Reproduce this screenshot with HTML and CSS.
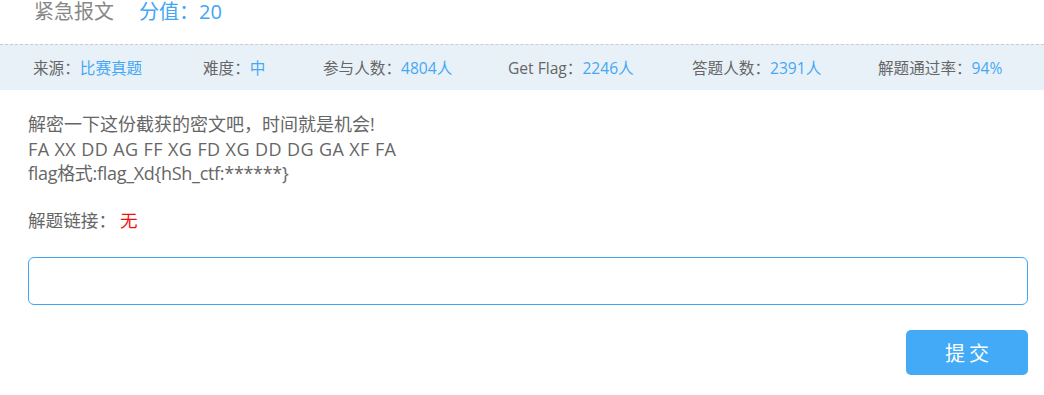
FILE: index.html
```html
<!DOCTYPE html>
<html lang="zh-CN">
<head>
<meta charset="utf-8">
<title>紧急报文</title>
<link rel="stylesheet" href="styles.css">
</head>
<body>
<div class="page">
  <div class="head">
    <span class="title">紧急报文</span>
    <span class="score">分值：20</span>
  </div>
  <div class="info">
    <div class="item"><span class="lbl">来源：</span><span class="val">比赛真题</span></div>
    <div class="item"><span class="lbl">难度：</span><span class="val">中</span></div>
    <div class="item"><span class="lbl">参与人数：</span><span class="val">4804人</span></div>
    <div class="item"><span class="lbl">Get Flag：</span><span class="val">2246人</span></div>
    <div class="item"><span class="lbl">答题人数：</span><span class="val">2391人</span></div>
    <div class="item"><span class="lbl">解题通过率：</span><span class="val">94%</span></div>
  </div>
  <div class="body">
    <div class="desc">
      <p>解密一下这份截获的密文吧，时间就是机会!</p>
      <p class="latin">FA XX DD AG FF XG FD XG DD DG GA XF FA</p>
      <p class="tight">flag格式:flag_Xd{hSh_ctf:******}</p>
    </div>
    <div class="link"><span class="lbl2">解题链接：</span><span class="none">无</span></div>
    <input class="flag-input" type="text">
    <div class="actions"><button class="submit">提交</button></div>
  </div>
</div>
</body>
</html>
```
FILE: styles.css
```css
* { box-sizing: border-box; }
html, body { margin: 0; padding: 0; background: #fff; }
body {
  font-family: "Open Sans", "Noto Sans CJK SC", sans-serif;
  color: #666;
}
.head {
  height: 44px;
  padding: 0 0 0 34px;
  display: flex;
  align-items: flex-start;
  gap: 25px;
  font-size: 20px;
  line-height: 24px;
}
.title { color: #888; }
.score { color: #42a5f5; }
.info {
  border-top: 1px dashed #c8cdd2;
  background: #e9f1f8;
  height: 46px;
  display: grid;
  grid-template-columns: 170px 120px 185px 184px 186px auto;
  align-items: center;
  padding-left: 33px;
  font-size: 15.6px;
}
.item { white-space: nowrap; }
.lbl { color: #666; }
.val { color: #45a8f5; }
.body { padding: 0 16px 0 28px; }
.desc { padding-top: 22px; font-size: 18px; line-height: 24.5px; color: #666; }
.desc p { margin: 0; }
.latin { letter-spacing: 0.4px; }
.tight { letter-spacing: -0.3px; }
.link { margin-top: 22px; font-size: 17.6px; line-height: 24px; }
.lbl2 { color: #666; }
.none { color: #f01010; margin-left: 4px; }
.flag-input {
  display: block;
  width: 1000px;
  height: 48px;
  margin-top: 25px;
  border: 1px solid #42a5f5;
  border-radius: 6px;
  outline: none;
  font-size: 16px;
  padding: 0 12px;
}
.actions { width: 1000px; display: flex; justify-content: flex-end; margin-top: 25px; }
.submit {
  width: 122px;
  height: 45px;
  border: none;
  border-radius: 5px;
  background: #42aaf6;
  color: #fff;
  font-family: "Noto Sans CJK SC", sans-serif;
  font-size: 20px;
  letter-spacing: 4px;
  text-indent: 4px;
}
```
